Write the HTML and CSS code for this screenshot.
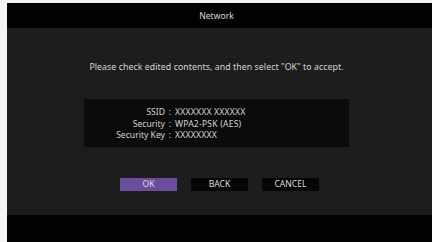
FILE: index.html
```html
<!DOCTYPE html>
<html>
<head>
<meta charset="utf-8">
<link rel="stylesheet" href="styles.css">
</head>
<body>
<div class="frame">
  <div class="screen">
    <div class="header">Network</div>
    <div class="content">
      <p class="message">Please check edited contents, and then select "OK" to accept.</p>
      <div class="info">
        <div class="row"><span class="label">SSID</span><span class="sep">:</span><span class="value">XXXXXXX XXXXXX</span></div>
        <div class="row"><span class="label">Security</span><span class="sep">:</span><span class="value">WPA2-PSK (AES)</span></div>
        <div class="row"><span class="label">Security Key</span><span class="sep">:</span><span class="value">XXXXXXXX</span></div>
      </div>
      <div class="buttons">
        <div class="btn active">OK</div>
        <div class="btn">BACK</div>
        <div class="btn">CANCEL</div>
      </div>
    </div>
    <div class="footer"></div>
  </div>
</div>
</body>
</html>
```
FILE: styles.css
```css
html, body {
  margin: 0;
  padding: 0;
  background: #f4f4f4;
}
body {
  width: 432px;
  height: 242px;
  overflow: hidden;
  font-family: "Noto Sans", "DejaVu Sans", sans-serif;
}
.frame {
  padding: 3px 0 0 7px;
}
.screen {
  width: 425px;
  height: 239px;
  display: flex;
  flex-direction: column;
  background: #1d1d1d;
}
.header {
  height: 25px;
  background: #020202;
  color: #d8d8d8;
  font-size: 8.6px;
  display: flex;
  align-items: center;
  justify-content: center;
  padding-top: 1px;
  box-sizing: border-box;
  padding-right: 6px;
}
.content {
  height: 187px;
  display: flex;
  flex-direction: column;
  align-items: center;
  padding-right: 6px;
  box-sizing: border-box;
}
.message {
  margin: 34px 0 0;
  height: 10px;
  line-height: 10px;
  font-size: 8.8px;
  letter-spacing: 0.05px;
  color: #d4d4d4;
}
.info {
  margin-top: 27px;
  width: 265px;
  height: 48px;
  box-sizing: border-box;
  background: #0b0b0b;
  padding-top: 8px;
  display: flex;
  flex-direction: column;
}
.row {
  display: flex;
  height: 11.5px;
  line-height: 11.5px;
  font-size: 8.6px;
  color: #d4d4d4;
}
.label {
  width: 81px;
  text-align: right;
}
.sep {
  width: 8px;
  text-align: center;
  margin: 0 1px;
}
.value {
  letter-spacing: 0.2px;
}
.buttons {
  margin-top: 31px;
  display: flex;
  gap: 14px;
  padding-left: 6px;
}
.btn {
  width: 57px;
  height: 13px;
  line-height: 13px;
  text-align: center;
  font-size: 8.6px;
  color: #dcdcdc;
  background: #060606;
}
.btn.active {
  background: #6a4d9c;
}
.footer {
  height: 27px;
  background: #020202;
}
```
